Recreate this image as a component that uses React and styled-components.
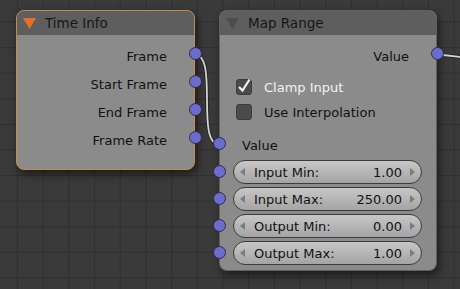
import React from "react";
import styled, { createGlobalStyle } from "styled-components";

const GlobalStyle = createGlobalStyle`
  html, body {
    margin: 0;
    padding: 0;
    background: #393939;
    overflow: hidden;
  }
  body {
    font-family: "DejaVu Sans", "Liberation Sans", sans-serif;
  }
`;

const Canvas = styled.div`
  position: relative;
  width: 460px;
  height: 289px;
  overflow: hidden;
  background-color: #3a3a3a;
  background-image: linear-gradient(to right, #2f2f2f 1px, transparent 1px),
    linear-gradient(to bottom, #2f2f2f 1px, transparent 1px);
  background-size: 25.7px 25.6px;
  background-position: 17px 21.5px;
`;

const Links = styled.svg`
  position: absolute;
  left: 0;
  top: 0;
  z-index: 0;
`;

// nodes sit on the free canvas, so they are placed by coordinates
const Node = styled.div`
  position: absolute;
  z-index: 1;
  left: ${(p) => p.$x}px;
  top: ${(p) => p.$y}px;
  width: ${(p) => p.$w}px;
  height: ${(p) => p.$h}px;
  box-sizing: border-box;
  display: flex;
  flex-direction: column;
  background: #8b8b8b;
  border: 1px solid ${(p) => (p.$active ? "#c98a45" : "rgba(0,0,0,0.3)")};
  border-radius: 8px;
  box-shadow: 2px 4px 8px rgba(0, 0, 0, 0.55);
`;

const Header = styled.div`
  height: 24px;
  flex: none;
  display: flex;
  align-items: center;
  gap: 9px;
  padding-left: 6px;
  background: #5e5e5e;
  border-radius: 7px 7px 0 0;
  color: #161616;
  font-size: 13.5px;
`;

const Body = styled.div`
  display: flex;
  flex-direction: column;
  padding-top: 5px;
`;

const Row = styled.div`
  position: relative;
  height: ${(p) => p.$h || 28}px;
  flex: none;
  display: flex;
  align-items: center;
  justify-content: ${(p) => (p.$out ? "flex-end" : "flex-start")};
  padding: ${(p) => (p.$out ? "0 27px 0 0" : `0 0 0 ${p.$pad || 0}px`)};
  margin-top: ${(p) => p.$gap || 0}px;
  font-size: 13px;
  color: #111;
`;

const Label = styled.span`
  padding-top: ${(p) => p.$drop || 0}px;
`;

const Socket = styled.span`
  position: absolute;
  top: 50%;
  ${(p) => (p.$out ? "right" : "left")}: -7.5px;
  width: 13px;
  height: 13px;
  margin-top: -7px;
  box-sizing: border-box;
  border-radius: 50%;
  background: #6c6ccf;
  border: 1px solid #2c2c48;
`;

const Box = styled.span`
  width: 16px;
  height: 16px;
  box-sizing: border-box;
  border-radius: 3px;
  background: #4b4b4b;
  border: 1px solid #3b3b3b;
  display: flex;
  align-items: center;
  justify-content: center;
`;

const CheckLabel = styled.span`
  margin-left: 12px;
  padding-top: 2px;
  color: ${(p) => (p.$on ? "#f2f2f2" : "#111")};
`;

const Field = styled.div`
  flex: 1;
  height: 24px;
  margin: 0 14px 0 13px;
  box-sizing: border-box;
  display: flex;
  align-items: center;
  padding: 0 6px;
  border: 1px solid #3c3c3c;
  border-radius: 12px;
  background: linear-gradient(#c7c7c7, #a4a4a4);
  color: #111;
`;

const FieldName = styled.span`
  flex: 1;
  margin-left: 8px;
  padding-top: 1px;
`;

const FieldValue = styled.span`
  margin-right: 7px;
  padding-top: 1px;
`;

const Arrow = ({ dir }) => (
  <svg width="6" height="8" viewBox="0 0 6 8">
    <polygon
      points={dir === "left" ? "5,0 5,8 0,4" : "1,0 1,8 6,4"}
      fill="#7c7c7c"
    />
  </svg>
);

const Collapse = ({ color }) => (
  <svg width="13" height="13" viewBox="0 0 13 13">
    <polygon points="0,1 13,1 6.5,12" fill={color} />
  </svg>
);

const Check = ({ on }) => (
  <Box>
    {on && (
      <svg width="16" height="16" viewBox="0 0 16 16" style={{ overflow: "visible" }}>
        <polyline
          points="3,8 6.5,11.5 13.5,0.5"
          fill="none"
          stroke="#f4f4f4"
          strokeWidth="2.2"
        />
      </svg>
    )}
  </Box>
);

const Output = ({ label }) => (
  <Row $out>
    <Label $drop={4}>{label}</Label>
    <Socket $out />
  </Row>
);

const ranges = [
  { name: "Input Min:", value: "1.00" },
  { name: "Input Max:", value: "250.00" },
  { name: "Output Min:", value: "0.00" },
  { name: "Output Max:", value: "1.00" },
];

const Link = ({ d }) => (
  <>
    <path d={d} fill="none" stroke="#242424" strokeWidth="3.6" />
    <path d={d} fill="none" stroke="#d4d4d4" strokeWidth="1.8" />
  </>
);

export default function App() {
  return (
    <>
      <GlobalStyle />
      <Canvas>
        <Links width="460" height="289">
          <Link d="M194.5,54.5 C219,54.5 195,144.5 219.5,144.5" />
          <Link d="M436,55 C452,55 454,57 470,58" />
        </Links>

        <Node $x={16} $y={10} $w={179} $h={160} $active>
          <Header>
            <Collapse color="#e6702a" />
            Time Info
          </Header>
          <Body>
            <Output label="Frame" />
            <Output label="Start Frame" />
            <Output label="End Frame" />
            <Output label="Frame Rate" />
          </Body>
        </Node>

        <Node $x={219} $y={10} $w={218} $h={261}>
          <Header>
            <Collapse color="#4c4c4c" />
            Map Range
          </Header>
          <Body>
            <Output label="Value" />
            <Row $h={25} $gap={6} $pad={16}>
              <Check on />
              <CheckLabel $on>Clamp Input</CheckLabel>
            </Row>
            <Row $h={25} $pad={16}>
              <Check />
              <CheckLabel>Use Interpolation</CheckLabel>
            </Row>
            <Row $gap={6} $pad={22}>
              <Label $drop={2}>Value</Label>
              <Socket />
            </Row>
            {ranges.map((r) => (
              <Row key={r.name} $h={27}>
                <Socket />
                <Field>
                  <Arrow dir="left" />
                  <FieldName>{r.name}</FieldName>
                  <FieldValue>{r.value}</FieldValue>
                  <Arrow dir="right" />
                </Field>
              </Row>
            ))}
          </Body>
        </Node>
      </Canvas>
    </>
  );
}
